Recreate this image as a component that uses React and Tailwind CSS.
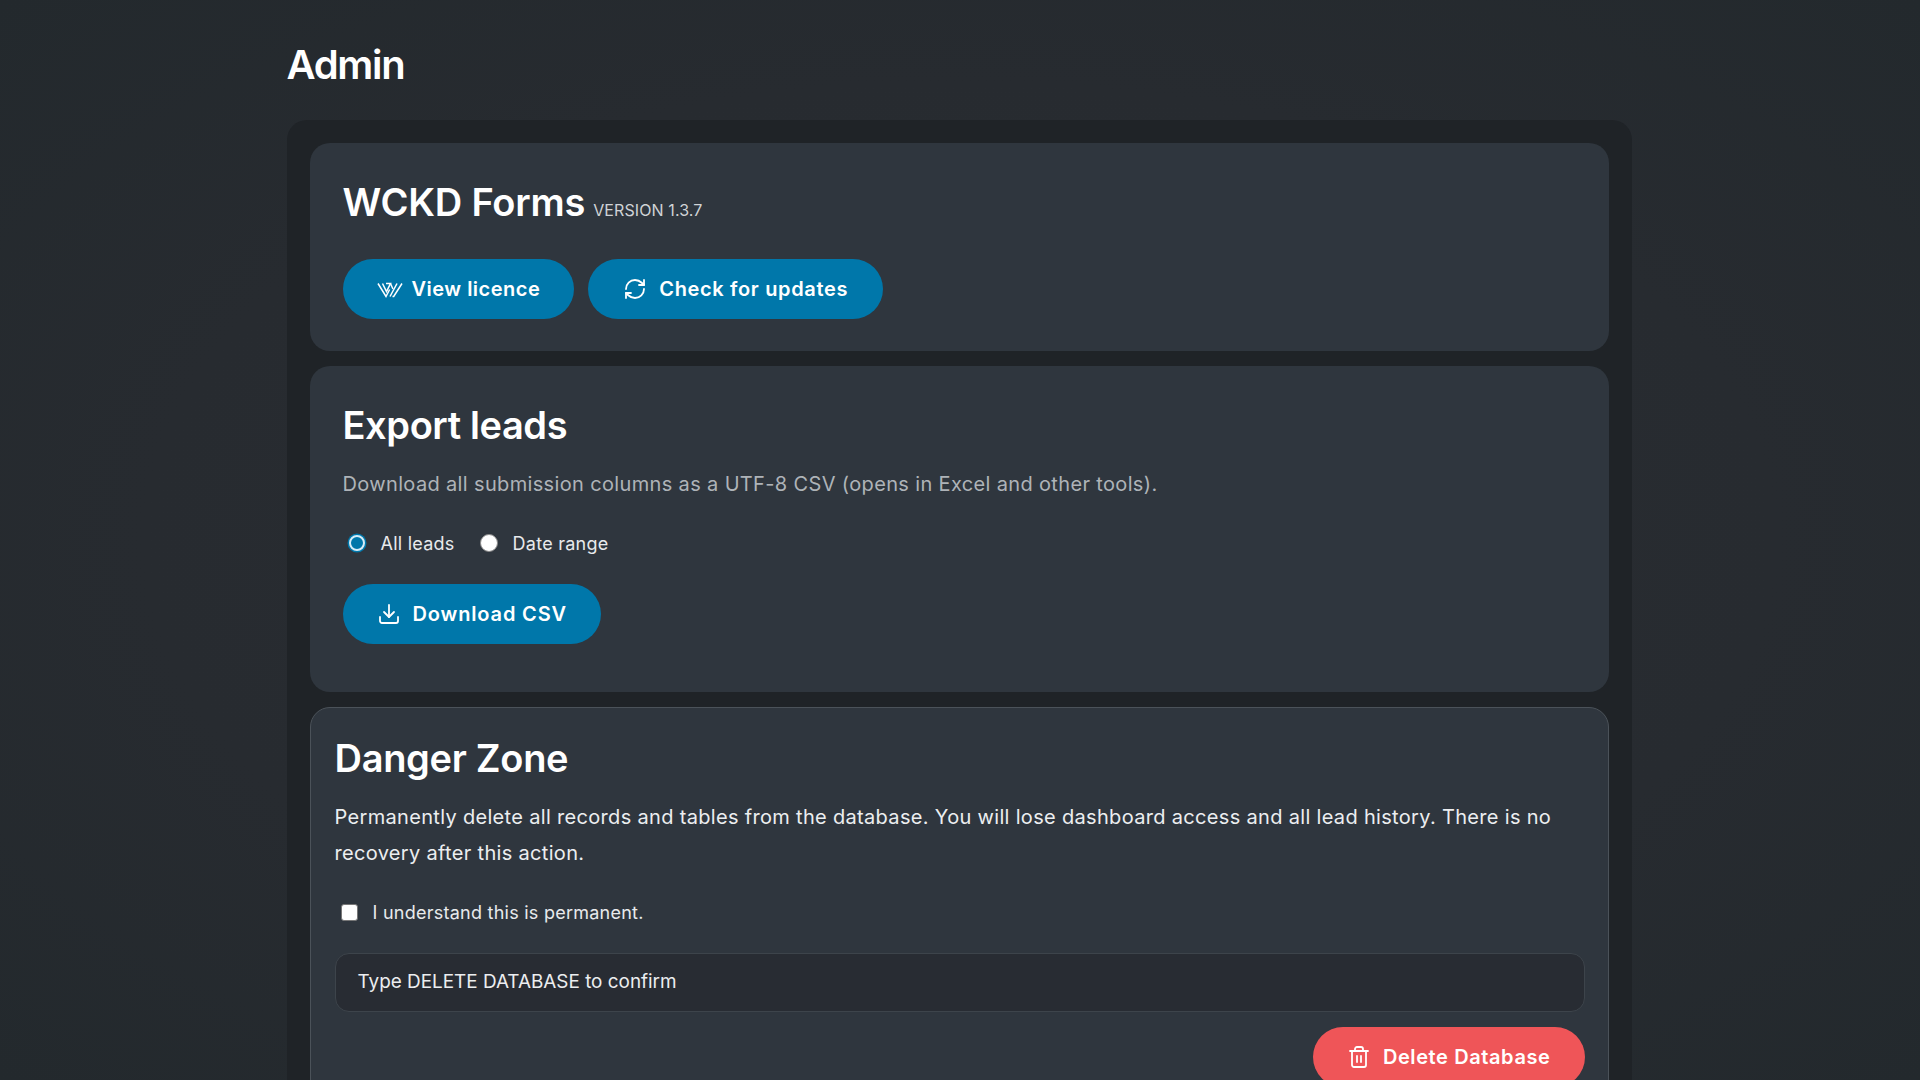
import { Download, RefreshCw, Trash2 } from 'lucide-react'

function WckdLogo() {
  return (
    <svg className="-mr-[3px]" width="26" height="24" viewBox="0 0 26 24" fill="none" stroke="currentColor" strokeWidth="1.5" aria-hidden="true">
      <path d="M1 6.5L9 19.5l3.6-7" />
      <path d="M5.5 6.5L9.5 14.5 13.5 6.5H9" />
      <path d="M13.5 6.5l2.4 5.5" />
      <path d="M13 19.5L20 6.5" />
      <path d="M15.5 19.5h1.2L25 6.5" />
    </svg>
  )
}

function PillButton({ icon, children, className }) {
  return (
    <button className={`flex h-[60px] items-center gap-[12px] rounded-full text-[20px] font-semibold text-white ${className}`}>
      {icon}
      {children}
    </button>
  )
}

export default function App() {
  return (
    <div className="h-screen overflow-hidden bg-[radial-gradient(ellipse_at_center,#2a2d32_0%,#272b30_60%,#23292d_100%)] font-['Inter',sans-serif] text-white">
      <div className="mx-auto w-[1347px] pt-[40px] pr-[2px]">
        <h1 className="mb-[30px] text-[40px] leading-[50px] font-semibold tracking-[-1.3px]">Admin</h1>

        <div className="flex flex-col gap-[15px] rounded-[20px] bg-[#1f2327] p-[23px]">
          <section className="rounded-[20px] bg-[#2f363e] px-[33px] pt-[35px] pb-[32px]">
            <div className="mb-[33px] flex items-baseline gap-[8px]">
              <h2 className="text-[38px] leading-[48px] font-semibold tracking-[-0.2px]">WCKD Forms</h2>
              <span className="text-[16px] tracking-[0.1px] text-[#d0d3d6]">VERSION 1.3.7</span>
            </div>
            <div className="flex gap-[14px]">
              <PillButton icon={<WckdLogo />} className="bg-[#0077aa] px-[34px] tracking-[0.5px]">View licence</PillButton>
              <PillButton icon={<RefreshCw size={24} strokeWidth={1.8} />} className="bg-[#0077aa] px-[35px] tracking-[0.65px]">Check for updates</PillButton>
            </div>
          </section>

          <section className="rounded-[20px] bg-[#2f363e] px-[33px] pt-[35px] pb-[48px]">
            <h2 className="text-[38px] leading-[48px] font-semibold tracking-[-0.4px]">Export leads</h2>
            <p className="mt-[17px] text-[20px] leading-[36px] tracking-[0.35px] text-[#aeb3b8]">
              Download all submission columns as a UTF-8 CSV (opens in Excel and other tools).
            </p>
            <div className="mt-[23px] flex h-[36px] items-center text-[18px] tracking-[0.25px] text-[#e8eaec]">
              <span className="ml-[6px] size-[16px] rounded-full border-[2px] border-[#d7edf8] bg-[#0077aa] ring-[1.5px] ring-[#0077aa]" />
              <span className="ml-[16px]">All leads</span>
              <span className="ml-[25px] size-[18px] rounded-full border border-[#8a8a8a] bg-white" />
              <span className="ml-[15px]">Date range</span>
            </div>
            <div className="mt-[23px] flex">
              <PillButton icon={<Download size={24} strokeWidth={1.8} />} className="bg-[#0077aa] px-[34px] tracking-[0.85px]">Download CSV</PillButton>
            </div>
          </section>

          <section className="rounded-[20px] border border-[#4b5259] bg-[#2f363e] pt-[26px] pr-[23px] pb-[24px] pl-[24px]">
            <h2 className="text-[38px] leading-[48px] font-semibold tracking-[-0.3px]">Danger Zone</h2>
            <p className="mt-[17px] text-[20px] leading-[36px] tracking-[0.32px] text-[#eceef0]">
              Permanently delete all records and tables from the database. You will lose dashboard access and all lead history. There is no recovery after this action.
            </p>
            <div className="mt-[23px] flex h-[36px] items-center text-[18px] tracking-[0.25px] text-[#e8eaec]">
              <span className="ml-[6px] size-[17px] rounded-[3px] border border-[#777] bg-white" />
              <span className="ml-[15px]">I understand this is permanent.</span>
            </div>
            <div className="mt-[23px] flex h-[59px] items-center rounded-[14px] border border-[#3d444b] bg-[#282c33] px-[22px] text-[18.9px] text-[#eceef0]">
              Type DELETE DATABASE to confirm
            </div>
            <div className="mt-[15px] flex justify-end">
              <PillButton icon={<Trash2 size={24} strokeWidth={1.8} />} className="bg-[#ef5558] px-[34px] tracking-[0.6px]">Delete Database</PillButton>
            </div>
          </section>
        </div>
      </div>
    </div>
  )
}
